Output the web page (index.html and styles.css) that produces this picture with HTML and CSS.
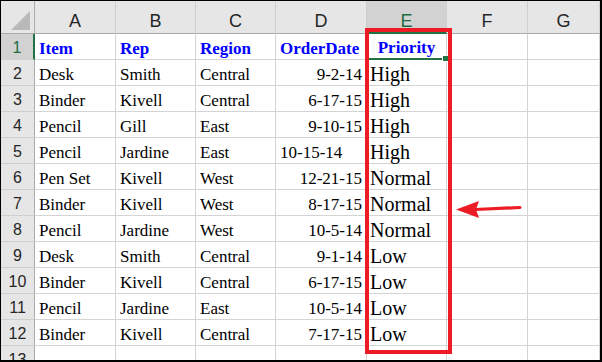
FILE: index.html
```html
<!DOCTYPE html>
<html>
<head>
<meta charset="utf-8">
<link rel="stylesheet" href="styles.css">
</head>
<body>
<div class="frame">
  <div class="sheet">
    <div class="corner"><span class="tri"></span></div>
    <div class="ch">A</div><div class="ch">B</div><div class="ch">C</div><div class="ch">D</div><div class="ch sel">E</div><div class="ch">F</div><div class="ch">G</div>

    <div class="rh sel">1</div>
    <div class="c h">Item</div><div class="c h">Rep</div><div class="c h">Region</div><div class="c h">OrderDate</div><div class="c h ctr active">Priority</div><div class="c"></div><div class="c"></div>

    <div class="rh">2</div>
    <div class="c">Desk</div><div class="c">Smith</div><div class="c">Central</div><div class="c r">9-2-14</div><div class="c p">High</div><div class="c"></div><div class="c"></div>

    <div class="rh">3</div>
    <div class="c">Binder</div><div class="c">Kivell</div><div class="c">Central</div><div class="c r">6-17-15</div><div class="c p">High</div><div class="c"></div><div class="c"></div>

    <div class="rh">4</div>
    <div class="c">Pencil</div><div class="c">Gill</div><div class="c">East</div><div class="c r">9-10-15</div><div class="c p">High</div><div class="c"></div><div class="c"></div>

    <div class="rh">5</div>
    <div class="c">Pencil</div><div class="c">Jardine</div><div class="c">East</div><div class="c">10-15-14</div><div class="c p">High</div><div class="c"></div><div class="c"></div>

    <div class="rh">6</div>
    <div class="c">Pen Set</div><div class="c">Kivell</div><div class="c">West</div><div class="c r">12-21-15</div><div class="c p">Normal</div><div class="c"></div><div class="c"></div>

    <div class="rh">7</div>
    <div class="c">Binder</div><div class="c">Kivell</div><div class="c">West</div><div class="c r">8-17-15</div><div class="c p">Normal</div><div class="c"></div><div class="c"></div>

    <div class="rh">8</div>
    <div class="c">Pencil</div><div class="c">Jardine</div><div class="c">West</div><div class="c r">10-5-14</div><div class="c p">Normal</div><div class="c"></div><div class="c"></div>

    <div class="rh">9</div>
    <div class="c">Desk</div><div class="c">Smith</div><div class="c">Central</div><div class="c r">9-1-14</div><div class="c p">Low</div><div class="c"></div><div class="c"></div>

    <div class="rh">10</div>
    <div class="c">Binder</div><div class="c">Kivell</div><div class="c">Central</div><div class="c r">6-17-15</div><div class="c p">Low</div><div class="c"></div><div class="c"></div>

    <div class="rh">11</div>
    <div class="c">Pencil</div><div class="c">Jardine</div><div class="c">East</div><div class="c r">10-5-14</div><div class="c p">Low</div><div class="c"></div><div class="c"></div>

    <div class="rh">12</div>
    <div class="c">Binder</div><div class="c">Kivell</div><div class="c">Central</div><div class="c r">7-17-15</div><div class="c p">Low</div><div class="c"></div><div class="c"></div>

    <div class="rh last">13</div>
    <div class="c"></div><div class="c"></div><div class="c"></div><div class="c"></div><div class="c"></div><div class="c"></div><div class="c"></div>
  </div>
  <div class="redbox"></div>
  <svg class="arrow" width="70" height="24" viewBox="0 0 70 24">
    <path d="M20 11.5 L65 9.5" stroke="#ed1c24" stroke-width="3.2" stroke-linecap="round" fill="none"/>
    <path d="M1 11.5 L24 3 L21 11.5 L24 20 Z" fill="#ed1c24"/>
  </svg>
</div>
</body>
</html>
```
FILE: styles.css
```css
html, body {
  margin: 0;
  padding: 0;
  background: #fff;
}

.frame {
  position: relative;
  width: 602px;
  height: 362px;
  box-sizing: border-box;
  border-top: 1px solid #000;
  border-left: 1px solid #000;
  border-right: 2px solid #000;
  border-bottom: 2px solid #000;
  overflow: hidden;
}

.sheet {
  display: grid;
  grid-template-columns: 34px 81px 80px 80px 91px 80px 81px 72px;
  grid-template-rows: 33px repeat(12, 26px) 26px;
}

.corner {
  background: #e6e6e6;
  border-right: 1px solid #ababab;
  border-bottom: 1px solid #ababab;
  box-sizing: border-box;
  position: relative;
}

.tri {
  position: absolute;
  right: 4px;
  bottom: 3px;
  width: 0;
  height: 0;
  border-left: 19px solid transparent;
  border-bottom: 19px solid #b9b9b9;
}

.ch {
  background: #e6e6e6;
  border-right: 1px solid #cfcfcf;
  border-bottom: 1px solid #ababab;
  box-sizing: border-box;
  display: flex;
  align-items: center;
  justify-content: center;
  padding-top: 9px;
  font-family: "Liberation Sans", Arial, sans-serif;
  font-size: 18px;
  color: #262626;
}

.ch.sel {
  background: #d2d2d2;
  color: #1e6b40;
  border-bottom: 2px solid #217346;
}

.rh {
  background: #e6e6e6;
  border-right: 1px solid #ababab;
  border-bottom: 1px solid #cfcfcf;
  box-sizing: border-box;
  display: flex;
  align-items: center;
  justify-content: center;
  padding-top: 3px;
  font-family: "Liberation Sans", Arial, sans-serif;
  font-size: 16px;
  color: #262626;
}

.rh.sel {
  background: #d2d2d2;
  color: #1e6b40;
  border-right: 2px solid #217346;
}

.c {
  border-right: 1px solid #d4d4d4;
  border-bottom: 1px solid #d4d4d4;
  box-sizing: border-box;
  display: flex;
  align-items: flex-end;
  padding: 0 4px 1px 4px;
  font-family: "Liberation Serif", "Times New Roman", serif;
  font-size: 17px;
  line-height: 19px;
  color: #000;
  white-space: nowrap;
}

.c.h {
  font-weight: bold;
  color: #0000ff;
}

.c.ctr {
  justify-content: center;
}

.c.r {
  justify-content: flex-end;
}

.c.p {
  font-size: 20px;
  line-height: 20px;
  padding-bottom: 1px;
  padding-left: 3px;
}

.c.active {
  position: relative;
  border-bottom: 2px solid #217346;
}

.c.active::after {
  content: "";
  position: absolute;
  right: -3px;
  bottom: -4px;
  width: 5px;
  height: 5px;
  background: #217346;
  border: 1px solid #fff;
}

.redbox {
  position: absolute;
  left: 364px;
  top: 27px;
  width: 87px;
  height: 326px;
  box-sizing: border-box;
  border: 4px solid #ed1c24;
}

.arrow {
  position: absolute;
  left: 454px;
  top: 197px;
}
```
